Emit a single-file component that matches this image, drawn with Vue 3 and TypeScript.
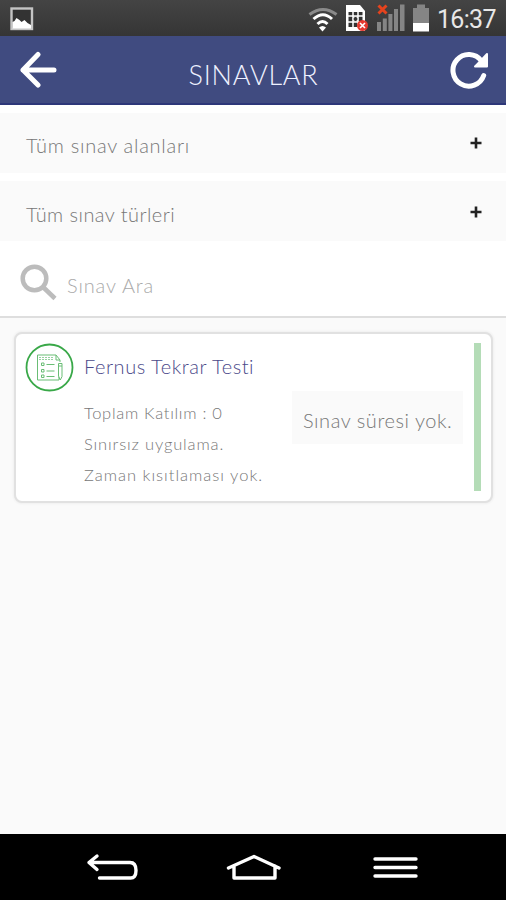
<script setup lang="ts">
interface Filter { id: string; label: string }
interface Exam { title: string; details: string[]; duration: string }

const filters: Filter[] = [
  { id: 'areas', label: 'Tüm sınav alanları' },
  { id: 'types', label: 'Tüm sınav türleri' },
]
const exams: Exam[] = [
  {
    title: 'Fernus Tekrar Testi',
    details: ['Toplam Katılım : 0', 'Sınırsız uygulama.', 'Zaman kısıtlaması yok.'],
    duration: 'Sınav süresi yok.',
  },
]
</script>

<template>
  <div class="screen">
    <div class="status">
      <svg class="shot" width="24" height="24" viewBox="0 0 24 24">
        <rect x="1.500" y="1.500" width="20.500" height="20.500" fill="#333" stroke="#c4c4c4" stroke-width="2.400" />
        <path d="M2.500 15l2-1 2-3 3 2 2 2 3-2 3 3 3.500 2v3.500h-18.500z" fill="#fff" />
      </svg>
      <div class="status-right">
        <svg width="124" height="32" viewBox="308 2 124 32">
          <g fill="none" stroke-width="3">
            <path d="M309.500 14.500q13.500-10 27 0" stroke="#8a8a8a" />
            <path d="M313.500 19q9.500-8.500 18.500 0" stroke="#fff" />
            <path d="M317.500 24q5-5 10 0" stroke="#fff" />
          </g>
          <path d="M319 27.500q3.500-3 7 0l-3.500 4z" fill="#fff" />
          <path d="M346 5h14l5 6v20h-19z" fill="#fff" />
          <path d="M348.500 12h14v15h-14z" fill="#333" />
          <path d="M348 16h15M348 22h15M353 12v15M358 12v15" stroke="#fff" stroke-width="1.500" />
          <circle cx="355.500" cy="19" r="2.500" fill="#333" stroke="#fff" />
          <circle cx="362.500" cy="25.500" r="5.500" fill="#e5392f" />
          <path d="M360 23l5 5m0-5l-5 5" stroke="#fff" stroke-width="1.600" />
          <path d="M377 22h4v9h-4zM382.800 18.500h4V31h-4zM388.400 14h4v17h-4zM394 9h4v22h-4zM400 4.500h4.500V31H400z" fill="#858585" />
          <path d="M378.500 5.500l8 8m0-8l-8 8" stroke="#e5431d" stroke-width="3" />
          <path d="M413 8h4V4.500h8V8h4v15h-16z" fill="#858585" />
          <path d="M413 23h16v8.500h-16z" fill="#fff" />
        </svg>
        <span class="clock">16:37</span>
      </div>
    </div>

    <header class="bar">
      <svg class="back" width="38" height="38" viewBox="0 0 38 38">
        <path d="M19 3.500L4 19l15 15M4 19h31" />
      </svg>
      <h1>SINAVLAR</h1>
      <svg class="reload" width="40" height="40" viewBox="0 0 40 40">
        <path class="ring" d="M33.700 25.500A15.800 15.800 0 1 1 31.500 11" />
        <path class="head" d="M37 4v12.500H25l5-5z" />
      </svg>
    </header>

    <section class="filters">
      <button v-for="filter in filters" :key="filter.id" class="filter" :class="filter.id">
        <span>{{ filter.label }}</span>
        <svg width="12" height="12" viewBox="0 0 12 12"><path d="M6 .500v11M.500 6h11" /></svg>
      </button>
    </section>

    <label class="search">
      <svg width="38" height="38" viewBox="0 0 38 38">
        <circle cx="14.500" cy="14.500" r="11.800" />
        <path d="M23.500 23.500l11.500 11" />
      </svg>
      <span>Sınav Ara</span>
    </label>

    <main class="list">
      <article v-for="exam in exams" :key="exam.title" class="card">
        <svg class="badge" width="49" height="49" viewBox="0 0 49 49">
          <circle cx="24.500" cy="24.500" r="23" stroke-width="1.800" />
          <g opacity=".75">
            <path d="M31 12H12.500v25H34v-3.500M31 12l4 5M31 12v5h4v2" />
            <path d="M14 14.500h14M14 16.500h14" stroke-dasharray="2 1" opacity=".7" />
            <path d="M16.500 20h2.500v2.500h-2.500zM16.500 26.500h2.500V29h-2.500zM16.500 32h2.500v2.500h-2.500z" />
            <path d="M21.500 21.500h8M21.500 28h8M21.500 33.500h8" />
            <path d="M33.500 20.500h3.500v13l-1.700 3.500-1.800-3.500zM33.500 23h3.500" />
          </g>
        </svg>
        <div class="info">
          <h2>{{ exam.title }}</h2>
          <p v-for="(detail, i) in exam.details" :key="detail" :class="'detail-' + i">{{ detail }}</p>
        </div>
        <div class="duration">{{ exam.duration }}</div>
        <div class="stripe"></div>
      </article>
    </main>

    <nav class="nav">
      <svg width="506" height="66" viewBox="0 834 506 66">
        <path d="M97 856l-8 6.500 8 7M89 862.500h41q6 0 6 8t-6 7.500H99.500" />
        <path d="M228.500 868l25.500-11.500 25 11.500M234 866v12h41v-12" />
        <path d="M375 859h41M375 867.500h41M375 876h41" />
      </svg>
    </nav>
  </div>
</template>

<style>
body { margin: 0; }
</style>

<style scoped>
.screen {
  width: 506px;
  height: 900px;
  display: flex;
  flex-direction: column;
  background: #fafafa;
  font-family: Lato, "Noto Sans", sans-serif;
  font-weight: 300;
  color: #777;
  overflow: hidden;
  white-space: nowrap;
}
.status {
  height: 36px;
  box-sizing: border-box;
  flex: none;
  display: flex;
  justify-content: space-between;
  padding: 0 9px 0 10px;
  background: linear-gradient(#444, #353535);
}
.shot { margin-top: 7px; }
.status-right { display: flex; padding-top: 2px; }
.clock {
  width: 65px;
  padding-left: 5px;
  box-sizing: border-box;
  font: 400 25px/35px Roboto, sans-serif;
  letter-spacing: -0.7px;
  color: #e8e8e8;
}
.bar {
  height: 69px;
  box-sizing: border-box;
  flex: none;
  display: flex;
  align-items: center;
  justify-content: space-between;
  padding: 0 16px 0 19px;
  background: #404b80;
  border-bottom: 2px solid #2d3779;
}
.bar svg { fill: none; stroke: #fff; stroke-width: 5; stroke-linecap: round; stroke-linejoin: round; }
.bar .head { fill: #fff; stroke-width: 2; }
h1 {
  margin: 11px 0 0;
  font-size: 27px;
  line-height: 32px;
  font-weight: 300;
  letter-spacing: 0.8px;
  color: #eef1ff;
}
.filters {
  flex: none;
  display: flex;
  flex-direction: column;
  gap: 8px;
  padding-top: 8px;
  background: #fff;
}
.filter {
  height: 60px;
  display: flex;
  align-items: center;
  justify-content: space-between;
  padding: 4px 24px 0 26px;
  border: 0;
  background: #fafafa;
  font: inherit;
  font-size: 20px;
  letter-spacing: 0.74px;
  color: #777;
}
.types { padding-top: 5px; letter-spacing: 0.45px; }
.filter svg { fill: none; stroke: #222; stroke-width: 2.6; margin-bottom: 4px; }
.search {
  height: 77px;
  box-sizing: border-box;
  flex: none;
  display: flex;
  align-items: center;
  gap: 9px;
  padding: 8px 20px 0;
  background: #fff;
  border-bottom: 2px solid #dedede;
  font-size: 20px;
  letter-spacing: 0.85px;
  color: #aaa;
}
.search svg { fill: none; stroke: #bcbcbc; stroke-width: 4.5; }
.search span { padding-top: 5px; }
.list { flex: 1; padding: 14px 13px 0 14px; }
.card {
  height: 171px;
  box-sizing: border-box;
  display: flex;
  padding: 9px 10px 9px 9px;
  border: 2px solid #e1e1e1;
  border-radius: 8px;
  background: #fff;
  box-shadow: 0 0 3px #e4e4e4;
}
.badge { flex: none; fill: none; stroke: #39a848; stroke-width: 1; }
.info { flex: none; width: 208px; padding-left: 10px; }
h2 {
  margin: 8px 0 17px;
  font-size: 20px;
  line-height: 30px;
  font-weight: 300;
  letter-spacing: 0.55px;
  color: #4b4989;
}
p { margin: 0; font-size: 16.5px; line-height: 31px; }
.detail-0 { letter-spacing: 0.7px; }
.detail-1 { letter-spacing: 0.85px; }
.detail-2 { letter-spacing: 1px; }
.duration {
  flex: none;
  width: 171px;
  height: 53px;
  margin: 48px 11px 0 0;
  box-sizing: border-box;
  padding-left: 11px;
  background: #fafafa;
  font-size: 20px;
  line-height: 58px;
  letter-spacing: 0.55px;
}
.stripe { flex: none; width: 7px; height: 148px; background: #b4dcb7; }
.nav { height: 66px; flex: none; background: #000; }
.nav svg { display: block; fill: none; stroke: #fff; stroke-width: 3.4; stroke-linecap: round; stroke-linejoin: round; }
</style>
